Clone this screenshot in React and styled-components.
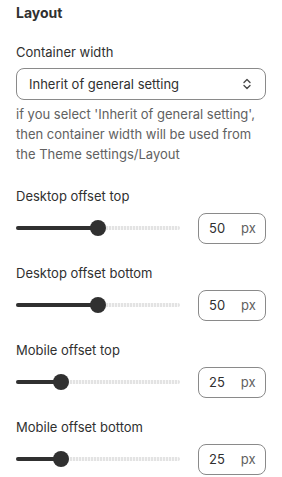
import React from 'react';
import styled, { createGlobalStyle } from 'styled-components';

const GlobalStyle = createGlobalStyle`
  body {
    margin: 0;
    background: #ffffff;
    font-family: Inter, "Noto Sans", sans-serif;
    color: #303030;
  }
`;

const Panel = styled.div`
  width: 282px;
  padding: 3px 16px 16px;
  box-sizing: border-box;
`;

const Heading = styled.h2`
  margin: 0;
  font-size: 14px;
  line-height: 20px;
  font-weight: 650;
  color: #303030;
`;

const Field = styled.div`
  display: flex;
  flex-direction: column;
  margin-top: ${(p) => p.$top || 19}px;
`;

const Label = styled.div`
  font-size: 13px;
  line-height: 20px;
  color: #303030;
  margin-bottom: ${(p) => p.$gap || 6}px;
`;

const SelectBox = styled.div`
  height: 32px;
  box-sizing: border-box;
  border: 1px solid #8a8a8a;
  border-radius: 8px;
  display: flex;
  align-items: center;
  justify-content: space-between;
  padding: 0 12px;
  font-size: 13px;
  color: #303030;
`;

const Help = styled.p`
  margin: 4px 0 0;
  font-size: 13px;
  line-height: 20px;
  color: #616161;
`;

const Row = styled.div`
  display: flex;
  align-items: center;
  gap: 18px;
`;

const Track = styled.div`
  position: relative;
  width: 164px;
  height: 32px;
  display: flex;
  align-items: center;
`;

const Rail = styled.div`
  width: 100%;
  height: 4px;
  border-radius: 2px;
  background: repeating-linear-gradient(
    90deg,
    #e3e3e3 0px,
    #e3e3e3 2px,
    #f7f7f7 2px,
    #f7f7f7 3px
  );
`;

const Fill = styled.div`
  position: absolute;
  left: 0;
  top: 14px;
  height: 4px;
  border-radius: 2px;
  background: #303030;
`;

const Thumb = styled.div`
  position: absolute;
  top: 8px;
  width: 16px;
  height: 16px;
  margin-left: -8px;
  border-radius: 50%;
  background: #303030;
`;

const NumberBox = styled.div`
  width: 68px;
  height: 31px;
  box-sizing: border-box;
  border: 1px solid #8a8a8a;
  border-radius: 8px;
  display: flex;
  align-items: center;
  padding-left: 10px;
  gap: 16px;
  font-size: 13px;
  color: #303030;
`;

const Unit = styled.span`
  color: #616161;
`;

function Chevrons() {
  return (
    <svg width="12" height="14" viewBox="0 0 12 14" fill="none" stroke="#4a4a4a" strokeWidth="1.4" strokeLinecap="round" strokeLinejoin="round">
      <path d="M3 5.5 L6 2.5 L9 5.5" />
      <path d="M3 8.5 L6 11.5 L9 8.5" />
    </svg>
  );
}

function RangeField({ label, value, top }) {
  const pos = 8 + (value / 100) * 148;
  return (
    <Field $top={top}>
      <Label>{label}</Label>
      <Row>
        <Track>
          <Rail />
          <Fill style={{ width: pos + 'px' }} />
          <Thumb style={{ left: pos + 'px' }} />
        </Track>
        <NumberBox>
          <span>{value}</span>
          <Unit>px</Unit>
        </NumberBox>
      </Row>
    </Field>
  );
}

export default function App() {
  return (
    <>
      <GlobalStyle />
      <Panel>
        <Heading>Layout</Heading>
        <Field $top={19}>
          <Label $gap={6}>Container width</Label>
          <SelectBox>
            <span>Inherit of general setting</span>
            <Chevrons />
          </SelectBox>
          <Help>
            if you select 'Inherit of general setting', then container width will be used from the Theme settings/Layout
          </Help>
        </Field>
        <RangeField label="Desktop offset top" value={50} top={22} />
        <RangeField label="Desktop offset bottom" value={50} />
        <RangeField label="Mobile offset top" value={25} />
        <RangeField label="Mobile offset bottom" value={25} />
      </Panel>
    </>
  );
}
